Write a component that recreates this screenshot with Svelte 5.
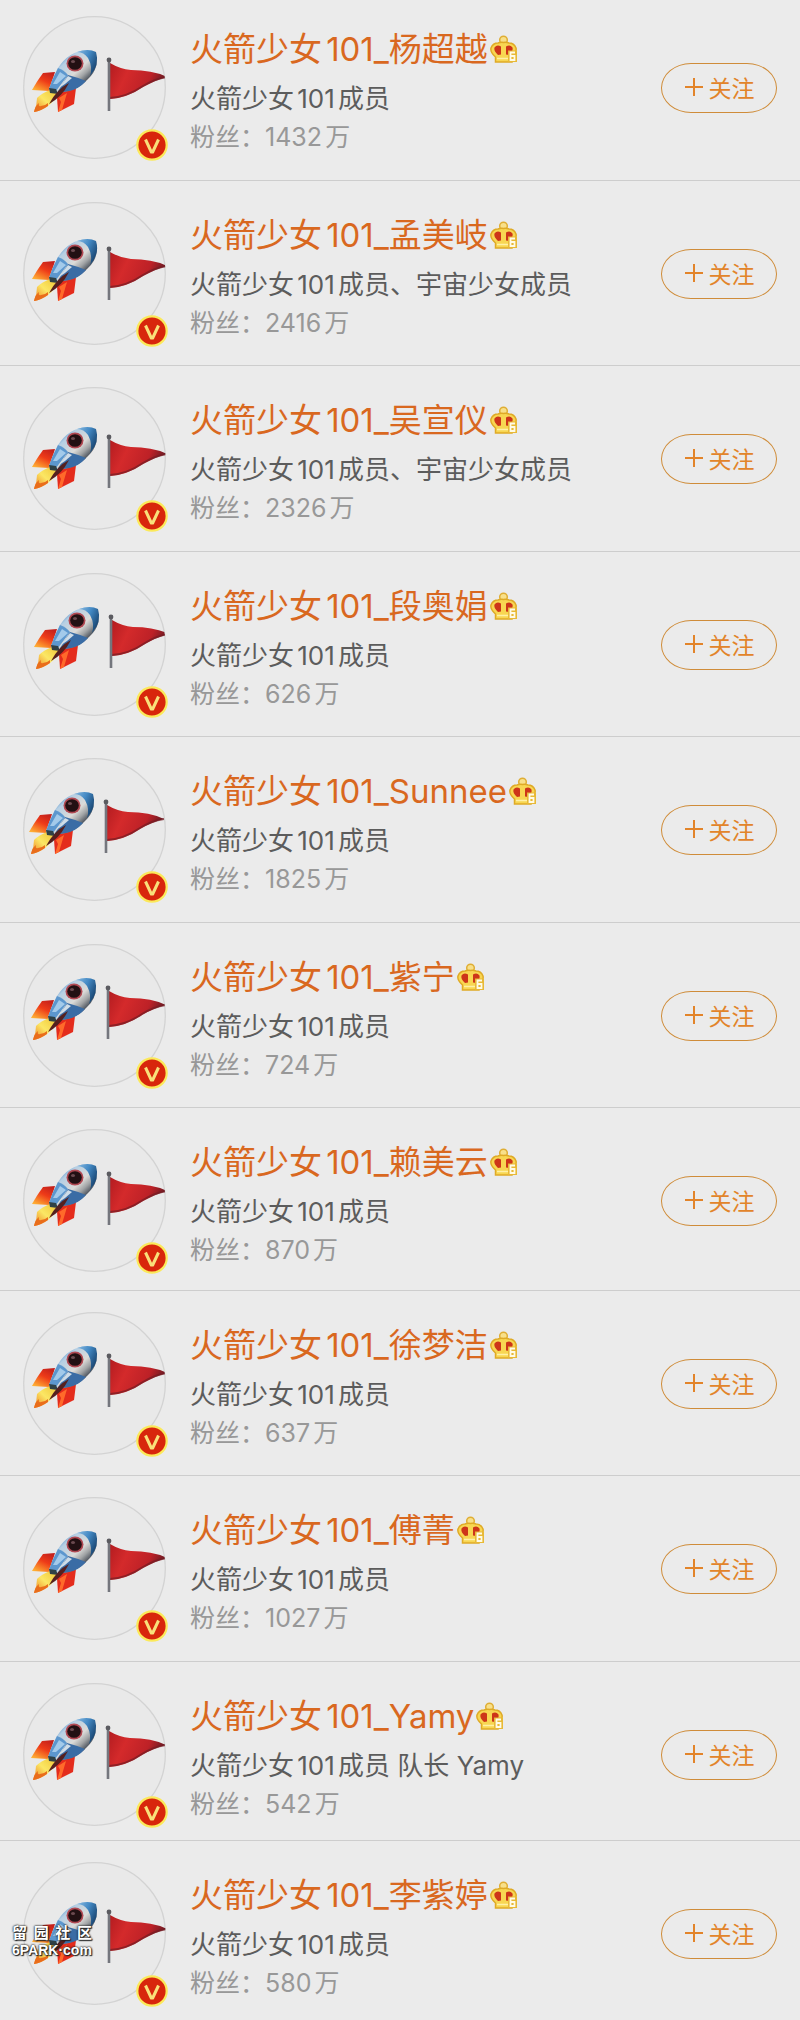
<script lang="ts">
	interface Member {
		name: string;
		intro: string;
		fans: number;
		// how far the photo is panned inside its round frame
		pan: [number, number];
	}

	const members: Member[] = [
		{name: '杨超越', intro: '火箭少女101成员', fans: 1432, pan: [0, -3]},
		{name: '孟美岐', intro: '火箭少女101成员、宇宙少女成员', fans: 2416, pan: [0, 0]},
		{name: '吴宣仪', intro: '火箭少女101成员、宇宙少女成员', fans: 2326, pan: [0, 3]},
		{name: '段奥娟', intro: '火箭少女101成员', fans: 626, pan: [2, -3]},
		{name: 'Sunnee', intro: '火箭少女101成员', fans: 1825, pan: [-3, -3]},
		{name: '紫宁', intro: '火箭少女101成员', fans: 724, pan: [-1, -3]},
		{name: '赖美云', intro: '火箭少女101成员', fans: 870, pan: [0, -2]},
		{name: '徐梦洁', intro: '火箭少女101成员', fans: 637, pan: [0, -3]},
		{name: '傅菁', intro: '火箭少女101成员', fans: 1027, pan: [0, -3]},
		{name: 'Yamy', intro: '火箭少女101成员 队长 Yamy', fans: 542, pan: [-1, -2]},
		{name: '李紫婷', intro: '火箭少女101成员', fans: 580, pan: [0, 3]}
	];

	const siteName = [...'留园社区'];
</script>

<svg class="defs" aria-hidden="true">
	<defs>
		<linearGradient id="hull" gradientUnits="userSpaceOnUse" x1="38" y1="44" x2="62" y2="70">
			<stop offset="0" stop-color="#4f8cc6" />
			<stop offset="0.2" stop-color="#b5cfe4" />
			<stop offset="0.6" stop-color="#dcdbd8" />
			<stop offset="0.8" stop-color="#a0a3a5" />
			<stop offset="1" stop-color="#454c56" />
		</linearGradient>
		<linearGradient id="tip" x1="0" y1="0" x2="1" y2="0.6">
			<stop offset="0" stop-color="#8abbe2" />
			<stop offset="0.5" stop-color="#4389c4" />
			<stop offset="1" stop-color="#184470" />
		</linearGradient>
		<linearGradient id="fin" x1="0.8" y1="0" x2="0.2" y2="1">
			<stop offset="0" stop-color="#c3201c" />
			<stop offset="0.45" stop-color="#ee3b18" />
			<stop offset="1" stop-color="#ffb235" />
		</linearGradient>
		<linearGradient id="flame" x1="1" y1="0" x2="0" y2="1">
			<stop offset="0" stop-color="#f0c435" />
			<stop offset="0.5" stop-color="#fbe765" />
			<stop offset="1" stop-color="#ee791c" />
		</linearGradient>
		<linearGradient id="cloth" x1="0" y1="0" x2="1" y2="0.3">
			<stop offset="0" stop-color="#b31c20" />
			<stop offset="0.35" stop-color="#d42a2b" />
			<stop offset="0.75" stop-color="#bd2127" />
			<stop offset="1" stop-color="#6d1b24" />
		</linearGradient>
		<clipPath id="round"><circle cx="71.5" cy="71.5" r="71" /></clipPath>
	</defs>
</svg>

<main>
	<ul>
		{#each members as member, i}
			<li>
				<div class="avatar">
					<svg class="photo" viewBox="0 0 143 143" aria-hidden="true">
						<circle cx="71.5" cy="71.5" r="70.8" fill="#e9e9e9" stroke="#d3d3d3" stroke-width="1.3" />
						<g clip-path="url(#round)">
							<g transform="translate({member.pan[0]} {member.pan[1]})">
								<path d="M32 59 20 60 Q14 68 9 77 L26 78 Z" fill="url(#fin)" />
								<path d="M41 77 53 75 51 91 35 99 34 84 Z" fill="#e42c1c" />
								<path d="M36 85 38 89 35 99 39 97 44 80 Z" fill="#ff6a2a" />
								<path d="M27 77 Q19 80 14 85 Q14 92 11 99 Q18 98 25 93 Q33 87 34 79 Z" fill="url(#flame)" />
								<path d="M11 99 Q12 93 16 90 Q15 94 18 93 Q22 93 25 90 L25 93 Q18 98 11 99 Z" fill="#e96d1b" />
								<path d="M73 39 Q77 55 65 66 Q57 75 46 78 L31 80 26 76 Q29 66 35 55 Q46 38 64 37 Q70 37 73 39 Z" fill="url(#hull)" />
								<path d="M73 39 Q77 52 67 63 Q70 54 65 45 Q61 39 54 39 Q65 35 73 39 Z" fill="url(#tip)" />
								<path d="M35 55 Q41 57 45 62 L33 78 26 76 Q29 66 35 55 Z" fill="#5c97ce" />
								<path d="M37 59 43 63 34 71 30 71 Z" fill="#a3caea" />
								<path d="M45 62 Q53 64 63 68 Q56 76 46 78 L34 80 Z" fill="#3a6ca5" />
								<path d="M45 63 49 65 42 71 36 75 Z" fill="#cfdde8" />
								<path d="M26 75 33 76 35 81 27 80 Z" fill="#2f4146" />
								<path d="M46 70 Q34 76 26 91 Q39 84 46 70 Z" fill="#55201f" />
								<ellipse cx="52" cy="50.500" rx="8.500" ry="8" fill="#b04852" />
								<ellipse cx="52" cy="50.500" rx="6.800" ry="6.300" fill="#221013" />
								<ellipse cx="50" cy="48.500" rx="2" ry="1.500" fill="#6b4a50" />
								<path d="M87 50 Q97 56 108 57 Q130 57 144 64 Q132 67 120 74 Q104 85 87 86 Z" fill="url(#cloth)" />
								<path d="M87 85 Q104 84 120 73 Q131 66 144 64" fill="none" stroke="#741c24" stroke-width="2" opacity="0.7" />
								<path d="M86 46V98" stroke="#74767d" stroke-width="2.600" />
								<circle cx="86" cy="47" r="2.400" fill="#5b5b60" />
							</g>
						</g>
					</svg>
					<svg class="badge" viewBox="0 0 32 32" role="img" aria-label="V">
						<circle cx="16" cy="16" r="14.700" fill="#d8260c" stroke="#fbe95a" stroke-width="2.200" />
						<path d="M9.500 10.500 15.300 23H16.700L22.500 10.500" fill="none" stroke="#f9e07a" stroke-width="3" stroke-linejoin="round" />
					</svg>
					{#if i === members.length - 1}
						<div class="watermark">
							<div class="site">
								{#each siteName as char}<span>{char}</span>{/each}
							</div>
							<div class="domain">6PARK·com</div>
						</div>
					{/if}
				</div>

				<div class="info">
					<h2>
						火箭少女101_{member.name}<svg class="crown" viewBox="0 0 28 28" aria-hidden="true">
							<circle cx="13.500" cy="5" r="3.800" fill="#f8e08a" stroke="#dfae35" stroke-width="1.500" />
							<path d="M5.500 27V22Q0 17 1 13Q3 8 8 8Q11 7 13.500 7.500Q16 7 19 8Q24 8 26 13Q27 17 22 22V27Z" fill="#f8d652" stroke="#dfaa26" stroke-width="1.500" />
							<path d="M11 19.500 8 20Q3.500 16 4.500 12.500Q7 9 11 11.500ZM16 19.500V11.500Q20 9 22.500 12.500Q23.500 16 19 20Z" fill="#cd3519" />
							<path d="M7 23.500H18" stroke="#fff0a6" stroke-width="1.500" />
							<path d="M18 15.500H27V27H18Z" fill="#e8b936" />
							<path d="M25 17.500H20.500V25H24.500V21H21" fill="none" stroke="#fffbe6" stroke-width="1.800" />
						</svg>
					</h2>
					<p class="intro">{member.intro}</p>
					<p class="fans">粉丝：{member.fans}万</p>
				</div>

				<button type="button">
					<svg viewBox="0 0 20 20" aria-hidden="true">
						<path d="M10 1V19M1 10H19" stroke="currentColor" stroke-width="2" />
					</svg>
					关注
				</button>
			</li>
		{/each}
	</ul>
</main>

<style>
	:global(body) {
		background: #ebebeb;
	}

	.defs {
		position: absolute;
		width: 0;
		height: 0;
	}

	main {
		font-family: Inter, 'Noto Sans CJK SC', sans-serif;
		text-autospace: normal;
		overflow: hidden;
	}

	ul {
		margin: 0;
		padding: 0;
		list-style: none;
	}

	li {
		display: flex;
		align-items: flex-start;
		padding: 21px 23px 20px;
		border-bottom: 1px solid #cdcdcd;
	}

	li:nth-child(odd) {
		padding-bottom: 21px;
	}

	li:first-child {
		padding-top: 16px;
	}

	li:nth-child(7) {
		padding-bottom: 18px;
	}

	li:nth-child(10) {
		padding-bottom: 14px;
	}

	li:last-child {
		padding-bottom: 14px;
		border-bottom: 0;
	}

	.avatar {
		position: relative;
		flex: none;
		width: 143px;
		height: 143px;
	}

	.photo {
		display: block;
		width: 100%;
		height: 100%;
	}

	.badge {
		position: absolute;
		right: -2px;
		bottom: -2px;
		width: 32px;
		height: 32px;
	}

	.watermark {
		position: absolute;
		left: -11px;
		top: 62px;
		width: 80px;
		color: #fff;
		font-weight: 700;
		text-shadow: 0 0 2px #222, 0 0 2px #222, 1px 1px 1px #222;
		white-space: nowrap;
	}

	.site {
		display: flex;
		justify-content: space-between;
		font-size: 15px;
		line-height: 18px;
	}

	.domain {
		font-family: 'Liberation Sans', sans-serif;
		font-size: 14px;
		line-height: 16px;
	}

	.info {
		flex: 1;
		min-width: 0;
		padding: 8px 0 0 24px;
	}

	h2,
	p {
		margin: 0;
		font-weight: 400;
		white-space: nowrap;
	}

	h2 {
		display: flex;
		align-items: center;
		font-size: 33px;
		line-height: 50px;
		color: #d9681f;
	}

	.crown {
		width: 28px;
		height: 28px;
		margin-left: 2px;
	}

	p {
		line-height: 39px;
	}

	.intro {
		margin-top: 5px;
		font-size: 26px;
		color: #5c5c5c;
	}

	.fans {
		font-size: 25px;
		color: #989898;
	}

	button {
		display: flex;
		align-items: center;
		justify-content: center;
		gap: 5px;
		flex: none;
		width: 116px;
		height: 50px;
		margin-top: 47px;
		padding: 0 0 2px;
		border: 1px solid #cf8c39;
		border-radius: 30px / 25px;
		background: transparent;
		color: #e2842a;
		font: inherit;
		font-size: 23px;
		cursor: pointer;
	}

	button svg {
		width: 20px;
		height: 20px;
	}
</style>
